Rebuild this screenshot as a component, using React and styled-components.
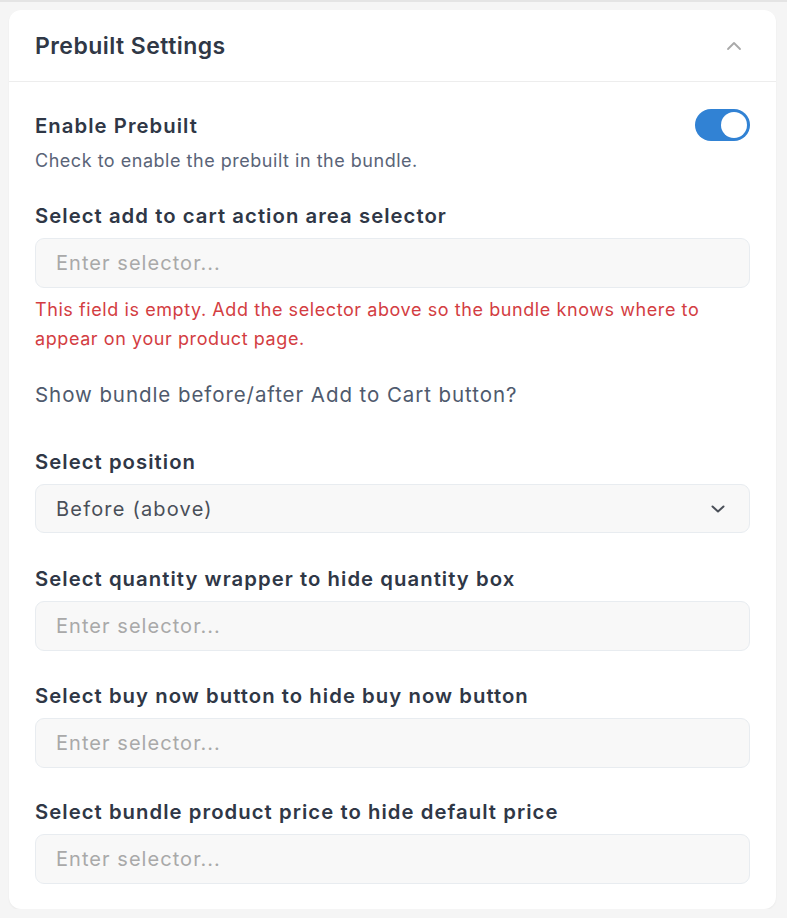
import styled, { createGlobalStyle } from 'styled-components'

const GlobalStyle = createGlobalStyle`
  html, body {
    margin: 0;
    padding: 0;
    background: #f5f5f5;
  }
  body {
    font-family: Inter, "Noto Sans", sans-serif;
    border-top: 2px solid #e4e4e4;
  }
`;

const ChevronUp = () => (
  <svg width="16" height="10" viewBox="0 0 16 10" fill="none">
    <path d="M2 8l6-6 6 6" stroke="#a9a9a9" strokeWidth="1.8" strokeLinecap="round" strokeLinejoin="round" />
  </svg>
);

const ChevronDown = () => (
  <svg width="16" height="10" viewBox="0 0 16 10" fill="none">
    <path d="M2.5 2.5l5.5 5 5.5-5" stroke="#4a4f58" strokeWidth="2" strokeLinecap="round" strokeLinejoin="round" />
  </svg>
);

const SelectorField = ({ label, top, children }) => (
  <Field $top={top}>
    <Label>{label}</Label>
    <Input type="text" placeholder="Enter selector..." />
    {children}
  </Field>
);

const App = () => {
  return (
    <>
      <GlobalStyle />
      <Card>
        <Header>
          <Title>Prebuilt Settings</Title>
          <ChevronUp />
        </Header>
        <Body>
          <ToggleRow>
            <Label>Enable Prebuilt</Label>
            <Switch $on>
              <Knob />
            </Switch>
          </ToggleRow>
          <Description>Check to enable the prebuilt in the bundle.</Description>

          <SelectorField label="Select add to cart action area selector" top="29px">
            <ErrorText>
              This field is empty. Add the selector above so the bundle knows where to appear on your product page.
            </ErrorText>
          </SelectorField>

          <Hint>Show bundle before/after Add to Cart button?</Hint>

          <Field>
            <Label>Select position</Label>
            <SelectBox>
              <span>Before (above)</span>
              <ChevronDown />
            </SelectBox>
          </Field>

          <SelectorField label="Select quantity wrapper to hide quantity box" top="32px" />
          <SelectorField label="Select buy now button to hide buy now button" top="31px" />
          <SelectorField label="Select bundle product price to hide default price" />
        </Body>
      </Card>
    </>
  );
};

export default App;

const Card = styled.div`
  margin: 8px 11px 0 9px;
  background: #fff;
  border-radius: 12px;
  box-shadow: 0 1px 2px rgba(0, 0, 0, 0.05);
  overflow: hidden;
`;

const Header = styled.div`
  display: flex;
  align-items: center;
  justify-content: space-between;
  height: 71px;
  padding: 0 34px 0 26px;
  border-bottom: 1px solid #ededed;
`;

const Title = styled.span`
  color: #303846;
  font-size: 23px;
  font-weight: 600;
  letter-spacing: 0.45px;
`;

const Body = styled.div`
  display: flex;
  flex-direction: column;
  padding: 27px 26px 25px 26px;
`;

const ToggleRow = styled.div`
  display: flex;
  align-items: center;
  justify-content: space-between;
`;

const Label = styled.span`
  color: #2f3746;
  font-size: 20.3px;
  font-weight: 600;
  letter-spacing: 1.05px;
  line-height: 27px;
`;

const Switch = styled.div`
  display: flex;
  align-items: center;
  justify-content: ${p => (p.$on ? 'flex-end' : 'flex-start')};
  width: 55px;
  height: 32px;
  padding: 3px;
  box-sizing: border-box;
  border-radius: 16px;
  background: ${p => (p.$on ? '#3182d4' : '#d1d5db')};
`;

const Knob = styled.div`
  width: 26px;
  height: 26px;
  border-radius: 50%;
  background: #fff;
`;

const Description = styled.span`
  margin-top: 8px;
  color: #5a6478;
  font-size: 18px;
  letter-spacing: 0.52px;
  line-height: 24px;
`;

const Field = styled.div`
  display: flex;
  flex-direction: column;
  margin-top: ${p => p.$top || '30px'};
`;

const Input = styled.input`
  margin-top: 9px;
  height: 50px;
  box-sizing: border-box;
  padding: 0 20px;
  border: 1px solid #e8ecf0;
  border-radius: 9px;
  background: #f8f8f8;
  font-family: Inter, "Noto Sans", sans-serif;
  font-size: 20px;
  letter-spacing: 1.05px;
  color: #303846;
  outline: none;

  &::placeholder {
    color: #a9a9a9;
  }
`;

const ErrorText = styled.p`
  margin: 7px 0 0 0;
  color: #d33d42;
  font-size: 18px;
  letter-spacing: 0.58px;
  line-height: 29px;
`;

const Hint = styled.p`
  margin: 28px 0 10px 0;
  color: #4f5a6d;
  font-size: 20.5px;
  letter-spacing: 0.93px;
  line-height: 27px;
`;

const SelectBox = styled.div`
  display: flex;
  align-items: center;
  justify-content: space-between;
  margin-top: 9px;
  height: 49px;
  box-sizing: border-box;
  padding: 0 23px 0 20px;
  border: 1px solid #e8ecf0;
  border-radius: 9px;
  background: #f8f8f8;
  color: #4a4f58;
  font-size: 20px;
  letter-spacing: 1.2px;
`;
